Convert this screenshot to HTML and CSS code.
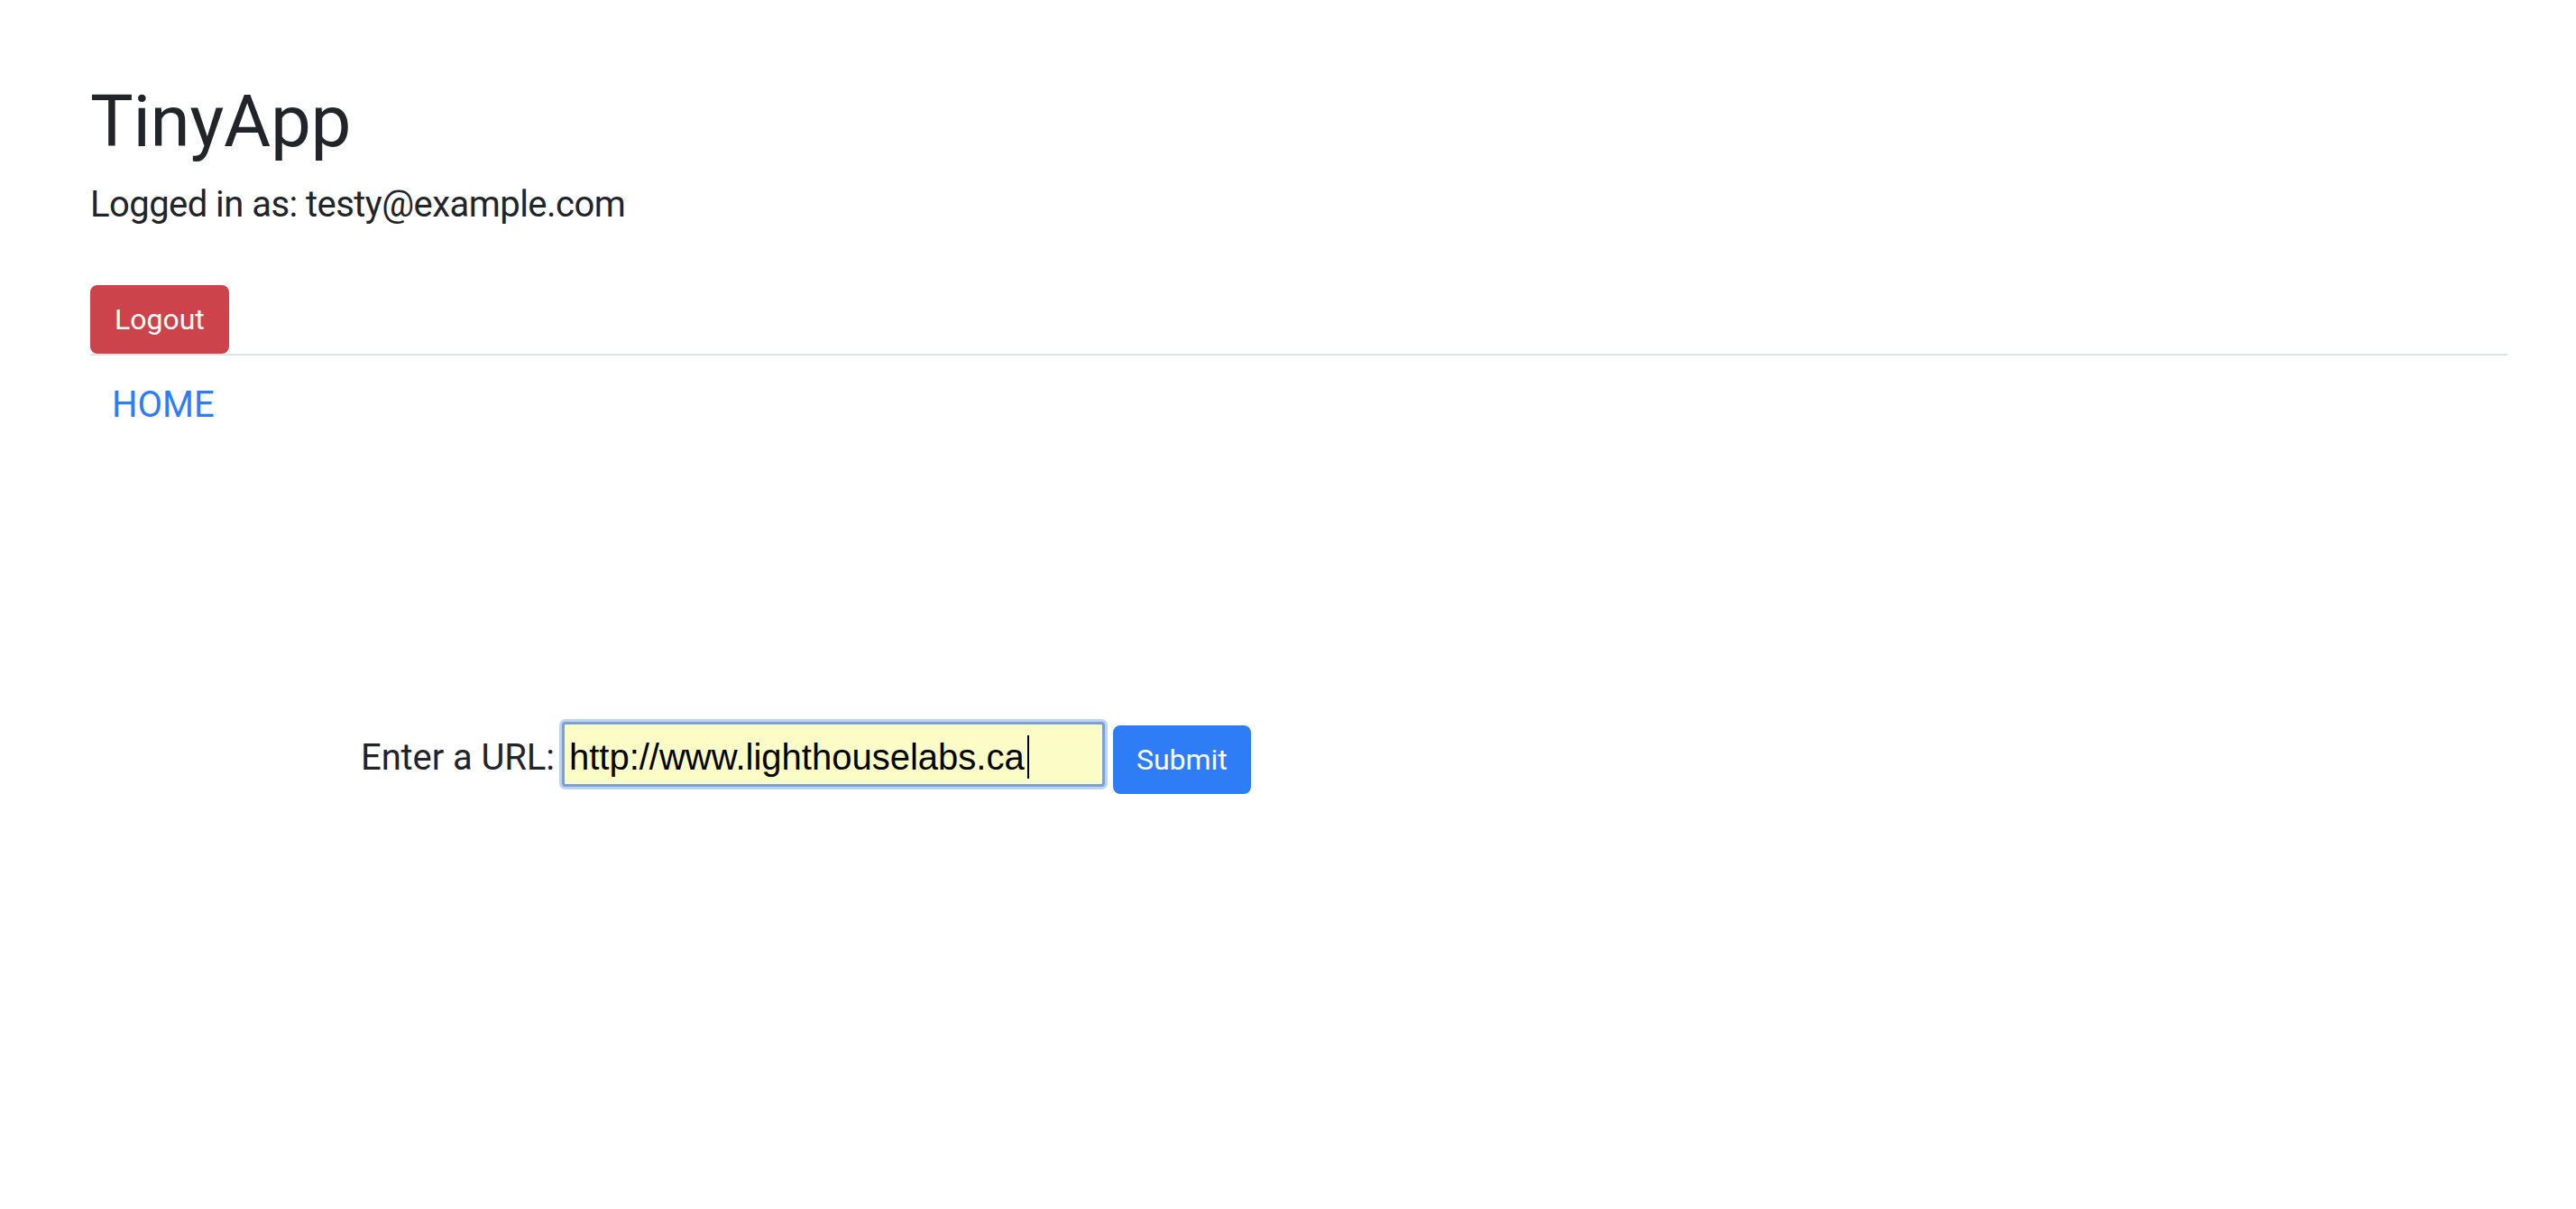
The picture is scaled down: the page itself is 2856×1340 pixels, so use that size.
FILE: index.html
```html
<!DOCTYPE html>
<html lang="en">
<head>
<meta charset="utf-8">
<title>TinyApp</title>
<link rel="stylesheet" href="styles.css">
</head>
<body>
<header class="masthead">
  <h1 class="brand">TinyApp</h1>
  <p class="login-status">Logged in as: testy@example.com</p>
  <nav class="nav-bar">
    <button class="btn btn-logout" type="button">Logout</button>
  </nav>
  <a class="home-link" href="#">HOME</a>
</header>
<main class="content">
  <form class="url-form">
    <label class="url-label">Enter a URL:</label>
    <div class="url-field">http://www.lighthouselabs.ca<span class="caret"></span></div>
    <button class="btn btn-submit" type="button">Submit</button>
  </form>
</main>
</body>
</html>
```

FILE: styles.css
```css
html, body {
  margin: 0;
  padding: 0;
  background: #ffffff;
}

body {
  font-family: Roboto, "Liberation Sans", sans-serif;
  color: #212529;
}

.masthead {
  padding: 87px 76px 0 100px;
}

.brand {
  margin: 0;
  font-size: 80px;
  line-height: 96px;
  font-weight: 400;
  letter-spacing: -0.3px;
}

.login-status {
  margin: 14px 0 0 0;
  font-size: 40px;
  line-height: 60px;
  letter-spacing: -0.55px;
}

.nav-bar {
  margin-top: 59px;
  display: flex;
  border-bottom: 2px solid #dee2e6;
}

.btn {
  font-family: Roboto, "Liberation Sans", sans-serif;
  font-size: 32px;
  line-height: 48px;
  padding: 12px 25px;
  border: 2px solid transparent;
  border-radius: 8px;
  color: #ffffff;
  cursor: pointer;
}

.btn-logout {
  background: #cc434c;
  border-color: #cc434c;
}

.home-link {
  display: inline-block;
  margin-top: 25px;
  padding-left: 24px;
  font-size: 40px;
  line-height: 60px;
  color: #2f7df6;
  text-decoration: none;
}

.content {
  padding-left: 400px;
  padding-top: 321px;
}

.url-form {
  display: flex;
  align-items: baseline;
}

.url-label {
  font-size: 40px;
  line-height: 60px;
  margin-right: 8px;
  letter-spacing: -0.1px;
}

.url-field {
  box-sizing: border-box;
  width: 602px;
  height: 72px;
  padding: 12px 10px 10px 5px;
  font-family: "Liberation Sans", Arial, sans-serif;
  font-size: 40px;
  line-height: 46px;
  color: #000000;
  background: #fbfcc6;
  border: 3px solid #7b9fd6;
  border-radius: 4px;
  box-shadow: 0 0 0 3px #bad3f6;
  white-space: nowrap;
}

.caret {
  display: inline-block;
  width: 2px;
  height: 48px;
  margin-left: 3px;
  background: #000000;
  vertical-align: -10px;
}

.btn-submit {
  margin-left: 9px;
  background: #2f7df6;
  border-color: #2f7df6;
  padding: 12px 24px;
}
```
